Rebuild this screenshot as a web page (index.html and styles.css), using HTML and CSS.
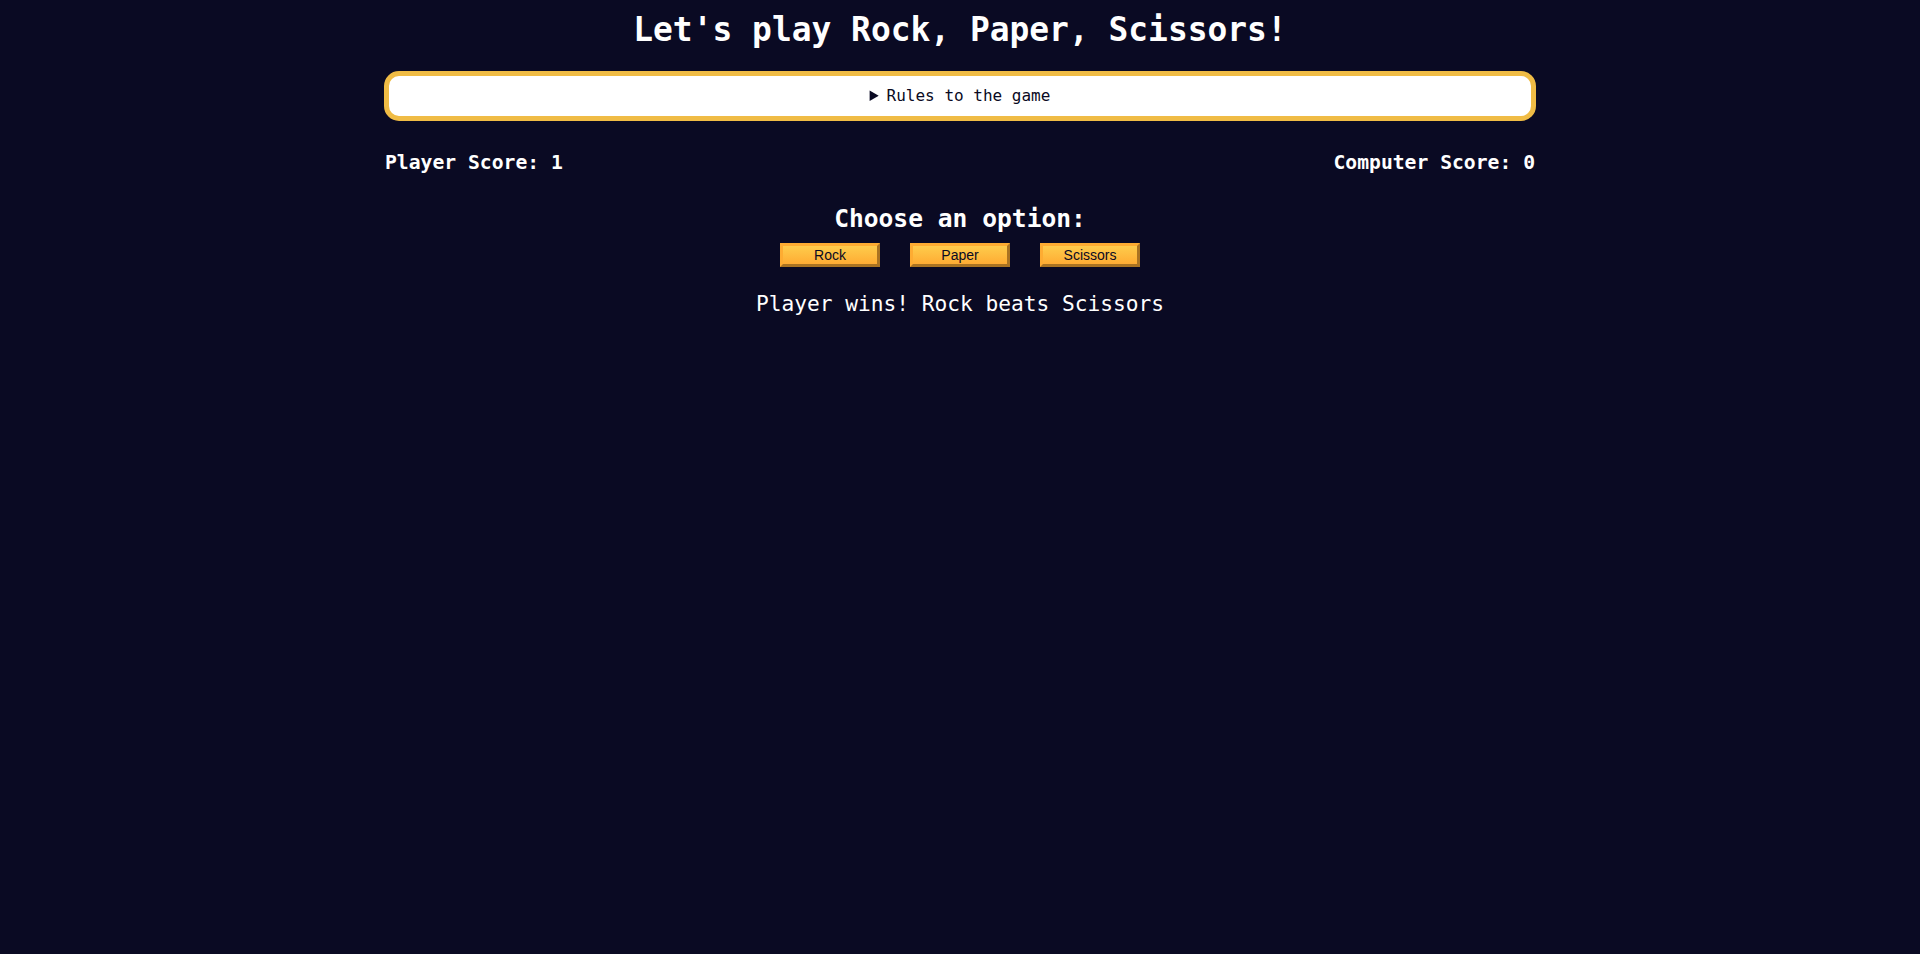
FILE: index.html
```html
<!DOCTYPE html>
<html lang="en">
<head>
<meta charset="utf-8">
<title>Rock, Paper, Scissors</title>
<link rel="stylesheet" href="styles.css">
</head>
<body>
  <h1 class="title">Let's play Rock, Paper, Scissors!</h1>
  <main class="game">
    <details class="rules-container">
      <summary>Rules to the game</summary>
    </details>
    <div class="score-container">
      <strong class="score">Player Score: <span>1</span></strong>
      <strong class="score">Computer Score: <span>0</span></strong>
    </div>
    <section class="options-container">
      <h2 class="options-title">Choose an option:</h2>
      <div class="btn-container">
        <button class="btn" type="button">Rock</button>
        <button class="btn" type="button">Paper</button>
        <button class="btn" type="button">Scissors</button>
      </div>
    </section>
    <p class="results-msg">Player wins! Rock beats Scissors</p>
  </main>
</body>
</html>
```
FILE: styles.css
```css
*, *::before, *::after {
  box-sizing: border-box;
}

body {
  margin: 0;
  padding-top: 11px;
  background-color: #0a0a23;
  color: #ffffff;
  font-family: "DejaVu Sans Mono", "Liberation Mono", monospace;
  text-align: center;
}

.title {
  margin: 0;
  font-size: 32.9px;
  line-height: 38px;
  font-weight: bold;
}

.game {
  width: 1152px;
  margin: 22px auto 0;
}

.rules-container {
  background-color: #ffffff;
  color: #0a0a23;
  border: 5px solid #f0bc45;
  border-radius: 15px;
  padding: 10px 0;
  font-size: 16px;
  line-height: 20px;
}

.rules-container summary {
  cursor: pointer;
}

.score-container {
  display: flex;
  justify-content: space-between;
  margin-top: 30px;
  padding: 0 1px;
  font-size: 19.7px;
  line-height: 23px;
}

.options-container {
  margin-top: 30px;
}

.options-title {
  margin: 0;
  font-size: 24.6px;
  line-height: 29px;
}

.btn-container {
  display: flex;
  justify-content: center;
  gap: 30px;
  margin-top: 10px;
}

.btn {
  width: 100px;
  height: 24px;
  padding: 0;
  color: #0a0a23;
  font-family: "Liberation Sans", Arial, sans-serif;
  font-size: 14px;
  background-color: #feac32;
  background-image: linear-gradient(#fecc4c, #ffac33);
  border: 3px outset #feac32;
  cursor: pointer;
}

.results-msg {
  margin: 24px 0 0;
  font-size: 21.2px;
  line-height: 26px;
}
```
